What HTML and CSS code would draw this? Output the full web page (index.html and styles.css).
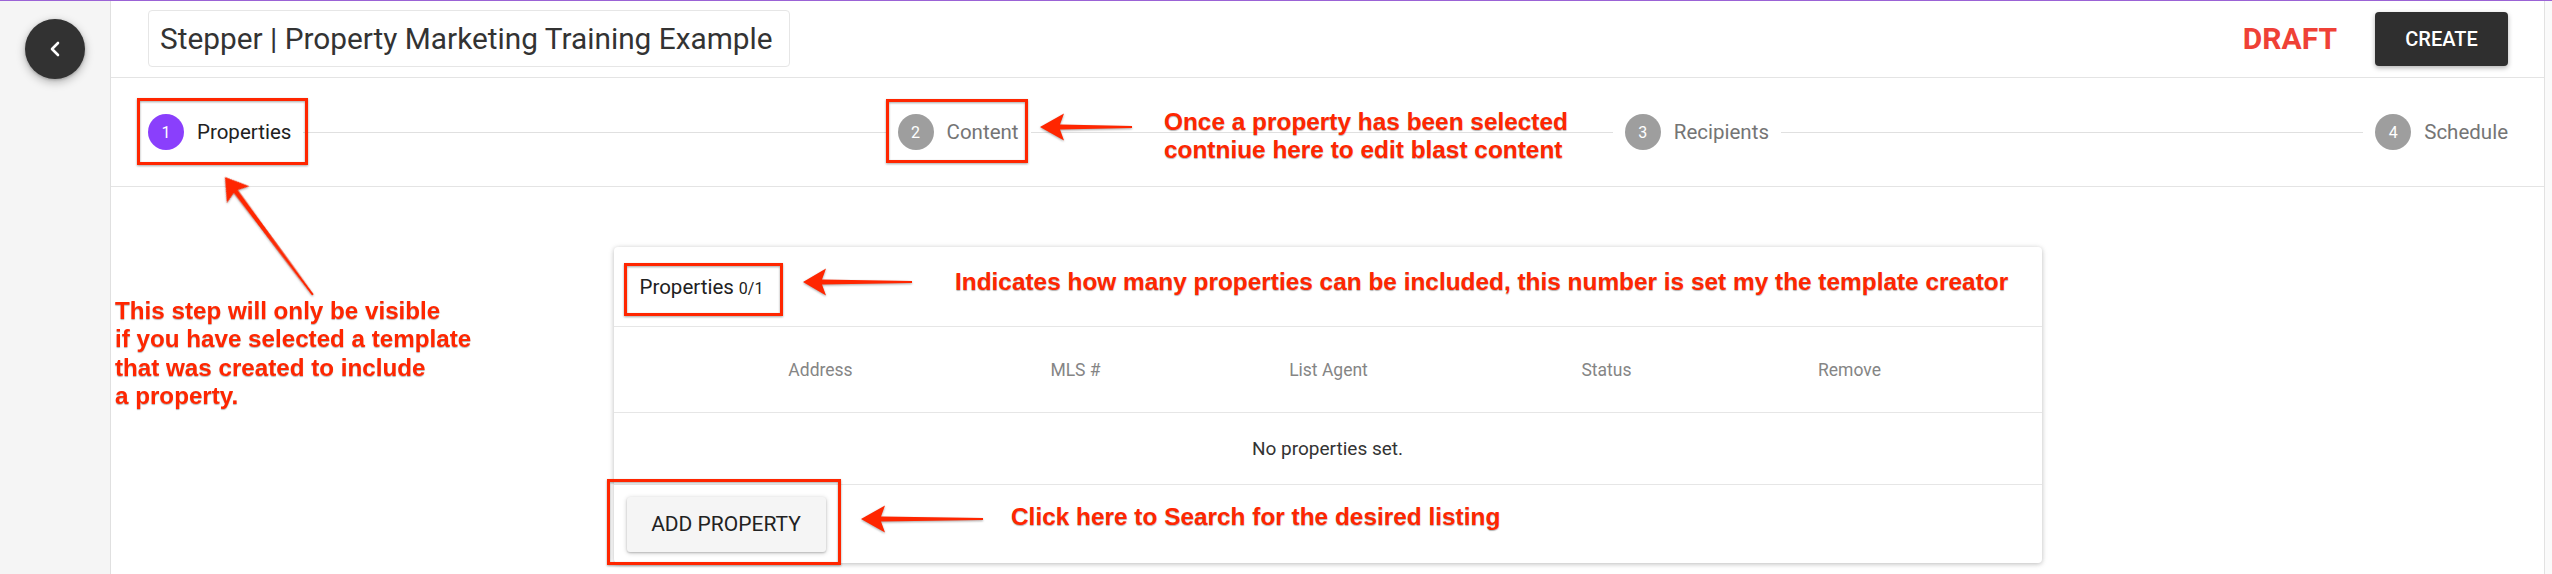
FILE: index.html
```html
<!DOCTYPE html>
<html lang="en">
<head>
<meta charset="utf-8">
<title>Stepper | Property Marketing Training Example</title>
<link rel="stylesheet" href="styles.css">
</head>
<body>
<div class="app">
  <aside class="sidebar">
    <button class="back-btn" aria-label="Back">
      <svg width="12" height="16" viewBox="0 0 12 16"><polyline points="9,2 3,8 9,14" fill="none" stroke="#fff" stroke-width="2.6" stroke-linecap="round" stroke-linejoin="round"/></svg>
    </button>
  </aside>
  <main class="main">
    <header class="topbar">
      <div class="title-input">Stepper | Property Marketing Training Example</div>
      <span class="status">DRAFT</span>
      <button class="create-btn">CREATE</button>
    </header>
    <nav class="stepper">
      <div class="step active"><span class="step-num">1</span><span class="step-label">Properties</span></div>
      <div class="connector"></div>
      <div class="step"><span class="step-num">2</span><span class="step-label">Content</span></div>
      <div class="connector"></div>
      <div class="step"><span class="step-num">3</span><span class="step-label">Recipients</span></div>
      <div class="connector"></div>
      <div class="step"><span class="step-num">4</span><span class="step-label">Schedule</span></div>
    </nav>
    <section class="content">
      <div class="card">
        <div class="card-header"><span class="card-title">Properties</span><span class="card-count">0/1</span></div>
        <div class="table-head">
          <span>Address</span><span>MLS #</span><span>List Agent</span><span>Status</span><span>Remove</span>
        </div>
        <div class="table-empty">No properties set.</div>
        <div class="card-footer"><button class="add-btn">ADD PROPERTY</button></div>
      </div>
    </section>
  </main>
  <div class="scrollbar"></div>
</div>

<div class="annotations">
  <svg class="annot-svg" width="2552" height="574" viewBox="0 0 2552 574">
    <g class="marks" fill="none" stroke="#ff2600" stroke-width="3">
      <rect x="138.5" y="99.5" width="168" height="64"/>
      <rect x="887.5" y="100.5" width="139" height="61"/>
      <rect x="625.5" y="264.5" width="156" height="50"/>
      <rect x="608.5" y="480.5" width="231" height="83"/>
    </g>
    <g class="marks" fill="#ff2600">
      <polygon transform="translate(1040 127)" points="0,0 24,-13.5 20,-2.4 92,-1 92,1 20,2.4 24,13.5"/>
      <polygon transform="translate(803 282)" points="0,0 23,-13.5 19,-2.4 109,-1 109,1 19,2.4 23,13.5"/>
      <polygon transform="translate(861 519)" points="0,0 24,-13.5 20,-2.4 122,-1 122,1 20,2.4 24,13.5"/>
      <polygon transform="translate(225 177) rotate(53.3)" points="0,0 22,-14 18,-2.4 147,-1 147,1 18,2.4 22,14"/>
    </g>
  </svg>
  <p class="note note-content">Once a property has been selected<br>contniue here to edit blast content</p>
  <p class="note note-steps">This step will only be visible<br>if you have selected a template<br>that was created to include<br>a property.</p>
  <p class="note note-count">Indicates how many properties can be included, this number is set my the template creator</p>
  <p class="note note-add">Click here to Search for the desired listing</p>
</div>
</body>
</html>
```

FILE: styles.css
```css
* { box-sizing: border-box; }

body {
  margin: 0;
  width: 2552px;
  height: 574px;
  overflow: hidden;
  position: relative;
  background: #fff;
  border-top: 1px solid #9b63d6;
  font-family: Roboto, "Noto Sans", "Liberation Sans", sans-serif;
  color: #212121;
}

.app {
  display: flex;
  height: 573px;
}

.sidebar {
  flex: none;
  width: 111px;
  background: #f5f5f5;
  border-right: 1px solid #e0e0e0;
  display: flex;
  justify-content: center;
  align-items: flex-start;
  padding-top: 18px;
}

.back-btn {
  width: 60px;
  height: 60px;
  border-radius: 50%;
  border: none;
  padding: 0;
  background: #323232;
  box-shadow: 0 3px 10px rgba(0, 0, 0, 0.28), 0 1px 3px rgba(0, 0, 0, 0.2);
  display: flex;
  align-items: center;
  justify-content: center;
}

.main {
  flex: 1;
  min-width: 0;
  display: flex;
  flex-direction: column;
}

.scrollbar {
  flex: none;
  width: 8px;
  background: #fafafa;
  border-left: 1px solid #e2e2e2;
}

.topbar {
  height: 77px;
  border-bottom: 1px solid #e4e4e4;
  display: flex;
  align-items: center;
  padding: 0 36px 1px 37px;
}

.title-input {
  width: 642px;
  height: 57px;
  border: 1px solid #e6e6e6;
  border-radius: 4px;
  padding-left: 11px;
  display: flex;
  align-items: center;
  font-size: 29.8px;
  color: #333;
  white-space: nowrap;
}

.status {
  margin-left: auto;
  font-size: 30px;
  font-weight: 700;
  color: #ef4136;
}

.create-btn {
  margin-left: 38px;
  width: 133px;
  height: 54px;
  border: none;
  border-radius: 4px;
  background: #2f2f2f;
  color: #fff;
  font-family: Roboto, sans-serif;
  font-size: 20px;
  font-weight: 500;
  box-shadow: 0 2px 5px rgba(0, 0, 0, 0.3);
}

.stepper {
  height: 109px;
  border-bottom: 1px solid #e4e4e4;
  display: flex;
  align-items: center;
  padding: 0 36px 0 37px;
}

.step {
  display: flex;
  align-items: center;
  gap: 13px;
}

.step-num {
  width: 36px;
  height: 36px;
  border-radius: 50%;
  background: #9e9e9e;
  color: #fff;
  font-size: 16px;
  display: flex;
  align-items: center;
  justify-content: center;
}

.step.active .step-num { background: #8a3ffc; }

.step-label {
  font-size: 20.5px;
  color: #757575;
}

.step.active .step-label { color: #212121; }

.connector {
  flex: 1;
  height: 1px;
  background: #e0e0e0;
  margin: 0 12px;
}

.content {
  flex: 1;
  padding-top: 60px;
}

.card {
  width: 1428px;
  margin: 0 auto;
  background: #fff;
  border-radius: 4px;
  box-shadow: 0 1px 6px rgba(0, 0, 0, 0.12), 0 1px 4px rgba(0, 0, 0, 0.16);
}

.card-header {
  height: 80px;
  border-bottom: 1px solid #e6e6e6;
  display: flex;
  align-items: center;
  gap: 5px;
  padding-left: 26px;
}

.card-title {
  font-size: 20.5px;
  color: #212121;
}

.card-count {
  font-size: 16px;
  color: #212121;
  padding-top: 3px;
}

.table-head {
  height: 86px;
  border-bottom: 1px solid #e6e6e6;
  display: grid;
  grid-template-columns: 256px 254px 252px 304px 182px;
  align-items: center;
  padding-left: 79px;
  font-size: 17.5px;
  color: #858585;
}

.table-head span { text-align: center; }

.table-empty {
  height: 72px;
  border-bottom: 1px solid #e6e6e6;
  display: flex;
  align-items: center;
  justify-content: center;
  font-size: 19px;
  color: #333;
}

.card-footer {
  height: 78px;
  display: flex;
  align-items: center;
  padding-left: 13px;
}

.add-btn {
  width: 199px;
  height: 55px;
  border: none;
  border-radius: 3px;
  background: #f5f5f5;
  color: #222;
  font-family: Roboto, sans-serif;
  font-size: 21px;
  box-shadow: 0 1px 5px rgba(0, 0, 0, 0.2), 0 1px 2px rgba(0, 0, 0, 0.18);
}

/* Annotation overlay */
.annotations {
  position: absolute;
  left: 0;
  top: -1px;
  width: 2552px;
  height: 574px;
  pointer-events: none;
}

.annot-svg {
  position: absolute;
  left: 0;
  top: 0;
}

.marks { filter: drop-shadow(0 1px 1px rgba(0, 0, 0, 0.35)); }

.note {
  position: absolute;
  margin: 0;
  font-family: "Liberation Sans", Arial, sans-serif;
  font-weight: 700;
  font-size: 24.4px;
  line-height: 28px;
  color: #ff2600;
  white-space: nowrap;
  text-shadow: 0 1px 1px rgba(0, 0, 0, 0.3);
}

.note-content { left: 1164px; top: 108px; }
.note-steps { left: 115px; top: 297px; line-height: 28.3px; font-size: 24.2px; }
.note-count { left: 955px; top: 268px; }
.note-add { left: 1011px; top: 503px; }
```
